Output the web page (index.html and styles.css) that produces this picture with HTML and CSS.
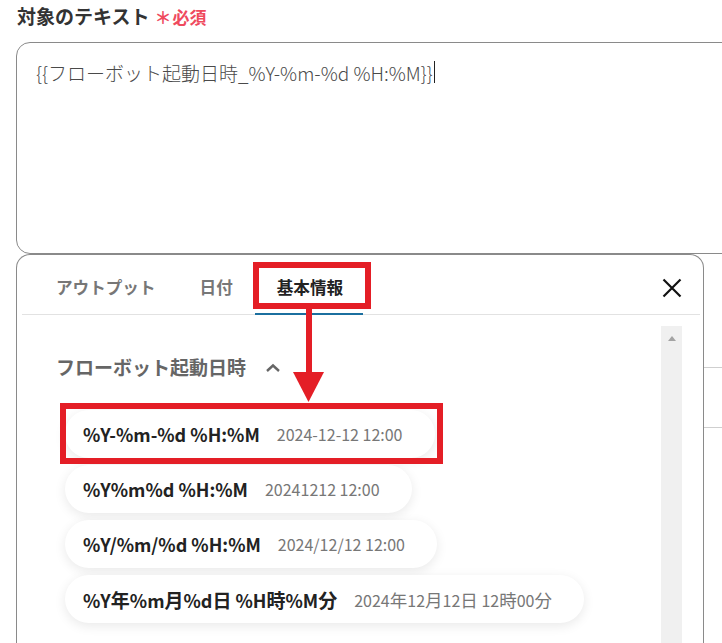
FILE: index.html
```html
<!DOCTYPE html>
<html lang="ja">
<head>
<meta charset="utf-8">
<title>対象のテキスト</title>
<link rel="stylesheet" href="styles.css">
</head>
<body>
<div class="page">
  <div class="field-label">対象のテキスト<span class="req"><span class="star">＊</span>必須</span></div>
  <div class="textarea"><span class="value">{{フローボット起動日時_%Y-%m-%d %H:%M}}</span><span class="caret"></span></div>
  <div class="lower">
    <div class="popup">
      <div class="tabs">
        <div class="tab">アウトプット</div>
        <div class="tab">日付</div>
        <div class="tab active">基本情報</div>
        <button class="close" aria-label="close">
          <svg width="20" height="20" viewBox="0 0 20 20"><path d="M1.5 1.5 L18.5 18.5 M18.5 1.5 L1.5 18.5" stroke="#111" stroke-width="2.2" fill="none"/></svg>
        </button>
      </div>
      <div class="body">
        <div class="list">
          <div class="section-head">フローボット起動日時
            <svg class="chev" width="16" height="10" viewBox="0 0 16 10"><path d="M2 8 L8 2.5 L14 8" stroke="#666" stroke-width="2.4" fill="none"/></svg>
          </div>
          <div class="items">
            <div class="item"><span class="fmt">%Y-%m-%d %H:%M</span><span class="ex">2024-12-12 12:00</span></div>
            <div class="item"><span class="fmt">%Y%m%d %H:%M</span><span class="ex">20241212 12:00</span></div>
            <div class="item"><span class="fmt">%Y/%m/%d %H:%M</span><span class="ex">2024/12/12 12:00</span></div>
            <div class="item"><span class="fmt">%Y<span class="cj">年</span>%m<span class="cj">月</span>%d<span class="cj">日</span> %H<span class="cj">時</span>%M<span class="cj">分</span></span><span class="ex">2024<span class="cj">年</span>12<span class="cj">月</span>12<span class="cj">日</span> 12<span class="cj">時</span>00<span class="cj">分</span></span></div>
          </div>
        </div>
        <div class="scrollbar"><span class="up"></span></div>
      </div>
    </div>
    <div class="behind">
      <div class="rule first"></div>
      <div class="rule second"></div>
    </div>
  </div>
  <div class="anno anno-tab"></div>
  <svg class="anno anno-arrow" width="32" height="96" viewBox="0 0 32 96"><rect x="13" y="0" width="6" height="66" fill="#e41e26"/><path d="M0 64 L31 64 L15.5 94 Z" fill="#e41e26"/></svg>
  <div class="anno anno-item"></div>
</div>
</body>
</html>
```
FILE: styles.css
```css
html, body {
  margin: 0;
  padding: 0;
  background: #fff;
}
body {
  width: 722px;
  height: 643px;
  overflow: hidden;
  font-family: "Noto Sans CJK JP", "Noto Sans", sans-serif;
}
.page {
  position: relative;
  height: 643px;
  overflow: hidden;
}
.field-label {
  padding: 4px 0 0 17px;
  font-size: 19px;
  line-height: 24px;
  font-weight: 700;
  color: #333;
}
.req {
  color: #ef4a5e;
  font-size: 17px;
  margin-left: 5px;
}
.star {
  margin-right: 1px;
}
.textarea {
  margin: 13px 0 0 16px;
  width: 740px;
  height: 212px;
  box-sizing: border-box;
  border: 1px solid #8a8a8a;
  border-radius: 14px;
  padding: 18px 19px;
  font-size: 19px;
  line-height: 24px;
  font-weight: 300;
  color: #4a4a4a;
  display: flex;
  align-items: flex-start;
}
.caret {
  display: inline-block;
  width: 1px;
  height: 22px;
  background: #222;
  margin-left: 1px;
}
.lower {
  display: flex;
  align-items: flex-start;
}
.popup {
  width: 688px;
  height: 420px;
  margin-left: 16px;
  box-sizing: border-box;
  border: 1px solid #8a8a8a;
  border-bottom: none;
  border-radius: 14px 14px 0 0;
  background: #fff;
}
.tabs {
  display: flex;
  align-items: stretch;
  height: 59px;
  margin: 0 3px 0 5px;
  padding-left: 12px;
  border-bottom: 1px solid #e2e2e2;
}
.tab {
  position: relative;
  display: flex;
  align-items: center;
  padding: 4px 22px 0;
  font-size: 16.6px;
  font-weight: 700;
  color: #777;
}
.tab.active {
  color: #222;
}
.tab.active::after {
  content: "";
  position: absolute;
  left: 0;
  right: 2px;
  bottom: -1px;
  height: 2px;
  background: #1b6f9f;
}
.close {
  margin-left: auto;
  margin-right: 18px;
  padding: 0;
  border: none;
  background: none;
  display: flex;
  align-items: center;
  padding-top: 6px;
}
.body {
  display: flex;
  padding-top: 11px;
}
.list {
  flex: 1;
}
.section-head {
  display: flex;
  align-items: center;
  margin-top: 29px;
  padding-left: 39px;
  font-size: 19px;
  line-height: 24px;
  font-weight: 700;
  color: #666;
}
.chev {
  margin-left: 19px;
  margin-top: 1px;
}
.items {
  display: flex;
  flex-direction: column;
  align-items: flex-start;
  gap: 7px;
  margin-top: 31px;
  padding-left: 48px;
}
.item {
  display: flex;
  align-items: center;
  gap: 17px;
  height: 48px;
  padding: 0 32px 0 18px;
  border-radius: 24px;
  background: #fff;
  box-shadow: 0 3px 12px rgba(0, 0, 0, 0.09);
}
.fmt {
  font-size: 18px;
  font-weight: 700;
  color: #222;
}
.fmt .cj {
  font-size: 19px;
}
.ex {
  font-size: 16px;
  font-weight: 400;
  color: #777;
}
.ex .cj {
  font-size: 17.5px;
}
.scrollbar {
  width: 21px;
  height: 400px;
  margin-right: 21px;
  background: #f0f0f0;
  display: flex;
  justify-content: center;
}
.up {
  width: 0;
  height: 0;
  margin-top: 10px;
  border-left: 4.5px solid transparent;
  border-right: 4.5px solid transparent;
  border-bottom: 5px solid #a3a3a3;
}
.behind {
  flex: 1;
  padding-top: 113px;
}
.rule {
  height: 1px;
  background: #cfcfcf;
}
.rule.second {
  margin-top: 59px;
}
.anno {
  position: absolute;
}
.anno-tab {
  left: 253px;
  top: 262px;
  width: 118px;
  height: 47px;
  box-sizing: border-box;
  border: 6px solid #e41e26;
}
.anno-arrow {
  left: 293px;
  top: 308px;
}
.anno-item {
  left: 60px;
  top: 403px;
  width: 383px;
  height: 61px;
  box-sizing: border-box;
  border: 6px solid #e41e26;
}
```
